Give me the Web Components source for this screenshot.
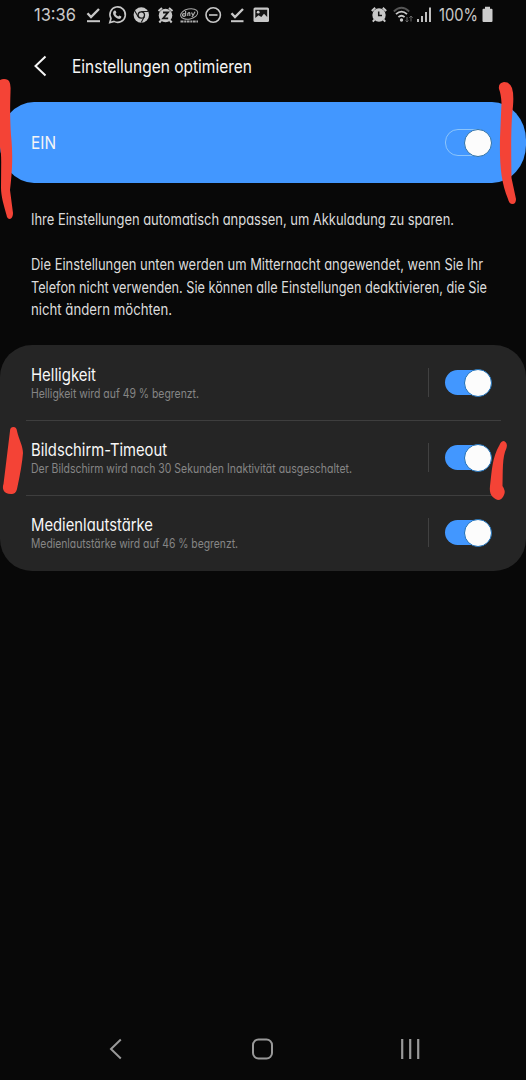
<!DOCTYPE html>
<html lang="de">
<head>
<meta charset="utf-8">
<title>Einstellungen optimieren</title>
<style>
html,body{margin:0;background:#080808}
body{font-family:Inter,Roboto,"Liberation Sans",sans-serif;font-feature-settings:"cv11";color:#f5f5f5}
</style>
</head>
<body>
<settings-screen></settings-screen>
<script>
function define(name, html, setup) {
  const t = document.createElement('template');
  t.innerHTML = html;
  customElements.define(name, class extends HTMLElement {
    connectedCallback() {
      if (this.shadowRoot) return;
      this.attachShadow({mode: 'open'}).append(t.content.cloneNode(true));
      if (setup) setup(this, this.shadowRoot);
    }
  });
}

/* One line of text, condensed or widened to the width it is given. */
define('fit-text', `<style>:host{display:block;white-space:nowrap}span{display:inline-block;transform-origin:0 50%}</style><span><slot></slot></span>`, (el, root) => {
  const span = root.querySelector('span'), w = +el.getAttribute('w');
  el.style.width = w + 'px';
  const natural = span.getBoundingClientRect().width;
  if (natural) span.style.transform = `scaleX(${w / natural})`;
});

define('toggle-switch', `<style>
:host{display:block;position:relative;width:47px;height:28px;flex:none}
.track{box-sizing:border-box;position:absolute;left:0;top:1px;width:44px;height:25px;border-radius:13px;background:#4297ff}
.knob{box-sizing:border-box;position:absolute;right:0;top:0;width:28px;height:28px;border-radius:50%;background:#fcfcfc;border:1px solid #1d6fb8}
:host([outline]) .track{border:1px solid #8cc5fb;top:.5px;height:27px}
:host([outline]) .knob{border-color:#2f72a8}
</style><div class="track"></div><div class="knob"></div>`);

define('status-bar', `<style>
:host{display:flex;height:30px;box-sizing:border-box;padding:0 33px 0 34px;align-items:center;justify-content:space-between;color:#c8c8c8;font-size:17.8px;line-height:30px}
div{display:flex;align-items:center}
svg{display:block;flex:none}
.left svg{margin-right:4px}
</style>
<div class="left">
<fit-text w="42" style="margin-right:7px">13:36</fit-text>
<svg width="20" height="20" viewBox="0 0 20 20" fill="none" stroke="#c8c8c8"><path d="M4.5 8.3 8 12 16 4" stroke-width="2.4"/><path d="M4 16.2H17" stroke-width="2"/></svg>
<svg width="20" height="20" viewBox="0 0 20 20"><path d="M2.8 17.5 4 13.5A7.7 7.7 0 1 1 7 16.4Z" fill="none" stroke="#c8c8c8" stroke-width="1.6"/><path d="M7.3 5.4 8.7 5.7 9.4 7.8 8.5 9.1Q9.4 10.9 11.3 11.6L12.4 10.6 14.4 11.6Q14.5 13.8 12.2 14 8.4 13.5 6.2 9.2 5.5 6.5 7.3 5.4Z" fill="#c8c8c8"/></svg>
<svg width="20" height="20" viewBox="0 0 20 20"><circle cx="10.3" cy="10" r="7.7" fill="#c8c8c8"/><circle cx="10.3" cy="10" r="3.2" fill="#c8c8c8" stroke="#181818" stroke-width="1.3"/><path d="M10.3 6.5H17M7.2 11.7 3.8 6M13.3 11.8 10.2 17.4" stroke="#181818" stroke-width="1.1"/></svg>
<svg width="20" height="20" viewBox="0 0 20 20"><circle cx="10.5" cy="10.5" r="6.8" fill="#c8c8c8"/><path d="M3.5 6 7 3M17.5 6 14 3M6 15.5 4.3 17.5M15 15.5 16.7 17.5" stroke="#c8c8c8" stroke-width="2"/><path d="M8 7.5H13L8.2 13.3H13.2" fill="none" stroke="#151515" stroke-width="1.8"/></svg>
<svg width="20" height="20" viewBox="0 0 20 20" fill="none" stroke="#aaa"><ellipse cx="10.2" cy="9" rx="8.7" ry="5" transform="rotate(-12 10.2 9)"/><path d="M6.6 6V11M6.5 9Q3.3 8 3.5 10.5 5 12 6.5 10.5M8.8 11V8.5Q10.5 7 10.8 8.3V11M12.5 7.5 14 10.5 16 6.7M14 10.5 12.8 12" stroke-width="1.2"/><path d="M1.5 16.5H19" stroke-width="1.8" stroke-dasharray="3 .7 1.8 .6"/></svg>
<svg width="20" height="20" viewBox="0 0 20 20" fill="none" stroke="#c8c8c8" stroke-width="1.6"><circle cx="10.2" cy="10" r="7.2"/><path d="M6 10H14.500"/></svg>
<svg width="20" height="20" viewBox="0 0 20 20" fill="none" stroke="#c8c8c8"><path d="M4.5 8.3 8 12 16 4" stroke-width="2.4"/><path d="M4 16.2H16.5" stroke-width="2"/></svg>
<svg width="20" height="20" viewBox="0 0 20 20"><rect x="2.5" y="2.5" width="15.5" height="14.5" rx="1.5" fill="#c8c8c8"/><path d="M4.3 4.8H16.2V12L13 8.8 10.3 12 7.5 10.2 4.3 13Z" fill="#151515"/><circle cx="7.2" cy="7.2" r="1.4" fill="#c8c8c8"/></svg>
</div>
<div>
<svg width="20" height="20" viewBox="0 0 20 20"><circle cx="10" cy="10" r="6.7" fill="#c8c8c8"/><path d="M2.8 6 6.2 2.8M17.2 6 13.8 2.8M5.5 14.700 3.8 16.700M14.5 14.700 16.2 16.700" stroke="#c8c8c8" stroke-width="2"/><path d="M9.7 6.5V10.6H13" fill="none" stroke="#151515" stroke-width="1.5"/></svg>
<svg style="margin-left:4px" width="21" height="20" viewBox="0 0 21 20" fill="none"><path d="M.8 6.500Q8.500-1 16.200 6.500" stroke="#555" stroke-width="1.8"/><path d="M3 9.200Q8.500 4 14 9.200M5.400 12.200Q8.500 9.200 11.600 12.200" stroke="#c8c8c8" stroke-width="1.8"/><circle cx="8.500" cy="15" r="1.700" fill="#c8c8c8"/><path d="M14 12V17M12.500 15.500 14 17 15.500 15.500M18 16.500V11M16.300 12.800 18 11 19.700 12.800" stroke="#666"/></svg>
<svg style="margin-left:2px" width="16" height="20" viewBox="0 0 16 20" stroke="#c8c8c8" stroke-width="1.9"><path d="M2 17V14M6 17V11M10 17V7M14 17V2.500"/></svg>
<fit-text w="39" style="margin:0 4px 0 7px">100%</fit-text>
<svg width="11" height="18" viewBox="0 0 11 18"><path d="M3 .8H8V2.8H9.5Q10.5 2.8 10.5 3.8V15Q10.5 16 9.5 16H1.5Q.5 16 .5 15V3.8Q.5 2.8 1.5 2.8H3Z" fill="#ccc"/></svg>
</div>`);

define('app-header', `<style>
:host{display:flex;align-items:center;height:72px;padding-left:33px;font-size:18px;line-height:24px}
svg{margin-right:23.5px}
fit-text{padding-top:2px}
</style><svg width="15" height="22" viewBox="0 0 15 22" fill="none" stroke="#f5f5f5" stroke-width="2"><path d="M12.5 1.5 2.5 11 12.5 20.5"/></svg><fit-text w="180"><slot></slot></fit-text>`);

define('master-switch', `<style>
:host{display:flex;align-items:center;justify-content:space-between;height:81px;padding:0 34.5px 0 30.5px;border-radius:34px/38px;background:#4297ff;font-size:17.8px}
</style><fit-text w="25"><slot></slot></fit-text><toggle-switch outline></toggle-switch>`);

define('info-text', `<style>
:host{display:block;padding:25.5px 30px 0 30.500px;height:136.5px;font-size:15.8px;line-height:22.7px;color:#dcdcdc}
.gap{height:22.6px}
</style>
<fit-text w="423">Ihre Einstellungen automatisch anpassen, um Akkuladung zu sparen.</fit-text>
<div class="gap"></div>
<fit-text w="452">Die Einstellungen unten werden um Mitternacht angewendet, wenn Sie Ihr</fit-text>
<fit-text w="456">Telefon nicht verwenden. Sie können alle Einstellungen deaktivieren, die Sie</fit-text>
<fit-text w="141">nicht ändern möchten.</fit-text>`);

define('setting-row', `<style>
:host{display:flex;align-items:center;height:75.2px;box-sizing:border-box;padding:0 34.5px 0 30.5px;position:relative}
:host(:not(:first-child))::before{content:"";position:absolute;left:26px;right:25px;top:0;height:1px;background:#3e3e3e}
.copy{flex:1;padding-top:3px}
.t{font-size:17px;line-height:20px;color:#f8f8f8}
.s{font-size:12.7px;line-height:18.5px;color:#868686}
.bar{width:1px;height:29px;background:#414141;margin-right:16px}
</style><div class="copy"><div class="t"></div><div class="s"></div></div><div class="bar"></div><toggle-switch></toggle-switch>`, (el, root) => {
  for (const [cls, text, w] of [['t', 'label', 'lw'], ['s', 'note', 'nw']]) {
    const f = document.createElement('fit-text');
    f.textContent = el.getAttribute(text);
    f.setAttribute('w', el.getAttribute(w));
    root.querySelector('.' + cls).append(f);
  }
});

define('settings-card', `<style>:host{display:block;background:#252525;border-radius:32px}</style><slot></slot>`);

define('nav-bar', `<style>
:host{display:flex;justify-content:space-between;align-items:center;height:62px;margin-top:auto;padding:0 105px 0 108px}
svg{display:block}
</style>
<svg width="15" height="22" viewBox="0 0 15 22" fill="none" stroke="#999" stroke-width="2"><path d="M12.8 1.5 3 11 12.8 20.5"/></svg>
<svg width="22" height="22" viewBox="0 0 22 22" fill="none" stroke="#999" stroke-width="2"><rect x="2" y="1.5" width="19" height="19" rx="5.5"/></svg>
<svg width="21" height="22" viewBox="0 0 21 22" stroke="#999" stroke-width="2.2"><path d="M2.2 1V21M10.2 1V21M18.2 1V21"/></svg>`);

define('pen-marks', `<style>:host{position:absolute;inset:0;pointer-events:none}svg{display:block}</style>
<svg width="526" height="1080" viewBox="0 0 526 1080" fill="#f44336">
<path d="M0 80Q4 78 8 80 11 82 10.5 92C10 108 10 118 11 135C13 155 12.5 170 10 190L13 213Q13 218 10 219 7 219 6.5 215C4 206 1 196 1 188L1.2 162Q1.2 152 0 147Z"/>
<path d="M499 89Q498 83 504 82 510 82 512 88 514 94 513 106C511 124 511 143 511.5 178L516 199Q516 204 512.5 204 509 204 508 199C501 182 499.5 165 500 138L501.5 103Q501 94 499 89Z"/>
<path d="M10 431Q10 427 13.5 427 16.5 427 17 431C19 440 23 446 23 453Q22 466 17 489C16 493 14 494 11 494 3 494 2 488 3.5 484 4 481 7.5 480C10 468 12 460 14 450Z"/>
<path d="M499.5 445Q501 441 504 441 508 443 506.5 448C502 457 503 472 502.5 486Q506 491 504 495 502 500 498 500C492 498 489 494 490 486C492 470 492 458 499.5 445Z"/>
</svg>`);

define('settings-screen', `<style>:host{display:flex;flex-direction:column;position:relative;width:526px;height:1080px;overflow:hidden;background:#080808}</style>
<status-bar></status-bar>
<app-header>Einstellungen optimieren</app-header>
<master-switch>EIN</master-switch>
<info-text></info-text>
<settings-card>
<setting-row label="Helligkeit" lw="65" note="Helligkeit wird auf 49 % begrenzt." nw="168"></setting-row>
<setting-row label="Bildschirm-Timeout" lw="136" note="Der Bildschirm wird nach 30 Sekunden Inaktivität ausgeschaltet." nw="321"></setting-row>
<setting-row label="Medienlautstärke" lw="122" note="Medienlautstärke wird auf 46 % begrenzt." nw="207"></setting-row>
</settings-card>
<nav-bar></nav-bar>
<pen-marks></pen-marks>`);
</script>
</body>
</html>
